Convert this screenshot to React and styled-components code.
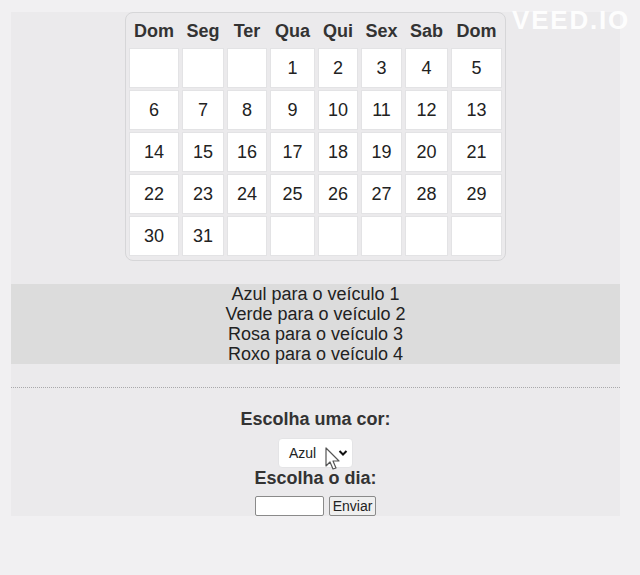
import React from 'react';
import styled, { createGlobalStyle } from 'styled-components';

const GlobalStyle = createGlobalStyle`
  html, body {
    margin: 0;
    padding: 0;
    background: #f1f0f2;
    font-family: "Liberation Sans", Arial, sans-serif;
    color: #222;
  }
`;

const Page = styled.div`
  position: relative;
  width: 640px;
  height: 575px;
  padding: 12px 20px 0 11px;
  box-sizing: border-box;
`;

const Main = styled.div`
  background: #ebeaec;
  height: 504px;
  display: flex;
  flex-direction: column;
  align-items: center;
`;

const Calendar = styled.div`
  width: 381px;
  box-sizing: border-box;
  border: 1px solid #d6d6d8;
  border-radius: 8px;
  padding: 3px 3px 4px;
  display: grid;
  grid-template-columns: 50px 42px 40px 45px 40px 41px 43px 51px;
  grid-template-rows: 30px repeat(5, 40px);
  column-gap: 3px;
  row-gap: 2px;
`;

const HeadCell = styled.div`
  display: flex;
  align-items: center;
  justify-content: center;
  font-weight: bold;
  font-size: 18px;
  color: #333;
`;

const DayCell = styled.div`
  display: flex;
  align-items: center;
  justify-content: center;
  background: #fff;
  border: 1px solid #e3e3e5;
  font-size: 18px;
  color: #222;
`;

const Legend = styled.div`
  margin-top: 23px;
  align-self: stretch;
  background: #dcdcdc;
  text-align: center;
  font-size: 18px;
  line-height: 20px;
  color: #222;
`;

const Divider = styled.div`
  align-self: stretch;
  margin-top: 23px;
  border-top: 1px dotted #a9a9ab;
`;

const Form = styled.form`
  display: flex;
  flex-direction: column;
  align-items: center;
  margin-top: 21px;
`;

const Label = styled.div`
  font-weight: bold;
  font-size: 18px;
  line-height: 20px;
  color: #333;
`;

const SelectBox = styled.div`
  position: relative;
  margin-top: 9px;
  width: 75px;
  height: 30px;
  box-sizing: border-box;
  background: #fff;
  border: 1px solid #e4e4e6;
  border-radius: 4px;
  display: flex;
  align-items: center;
  justify-content: space-between;
  padding: 0 4px 0 10px;
  font-size: 14px;
  color: #222;
`;

const Row = styled.div`
  display: flex;
  gap: 5px;
  margin-top: 8px;
`;

const TextInput = styled.input`
  width: 69px;
  height: 20px;
  box-sizing: border-box;
  border: 1px solid #8a8a8a;
  border-radius: 2px;
  background: #fff;
  padding: 0;
`;

const Button = styled.button`
  height: 20px;
  width: 47px;
  box-sizing: border-box;
  border: 1px solid #8a8a8a;
  border-radius: 2px;
  background: #efefef;
  font-family: "Liberation Sans", Arial, sans-serif;
  font-size: 14px;
  color: #222;
  padding: 0;
`;

const Cursor = styled.svg`
  position: absolute;
  left: 46px;
  top: 8px;
`;

const Watermark = styled.div`
  position: absolute;
  top: 5px;
  left: 512px;
  font-family: "Liberation Sans", Arial, sans-serif;
  font-weight: bold;
  font-size: 26px;
  letter-spacing: 1.8px;
  color: rgba(255, 255, 255, 0.92);
`;

const days = ['Dom', 'Seg', 'Ter', 'Qua', 'Qui', 'Sex', 'Sab', 'Dom'];
const cells = [null, null, null];
for (let i = 1; i <= 31; i++) cells.push(i);
while (cells.length < 40) cells.push(null);

const legend = [
  'Azul para o veículo 1',
  'Verde para o veículo 2',
  'Rosa para o veículo 3',
  'Roxo para o veículo 4'
];

export default function App() {
  return (
    <Page>
      <GlobalStyle />
      <Main>
        <Calendar>
          {days.map((d, i) => <HeadCell key={`h${i}`}>{d}</HeadCell>)}
          {cells.map((c, i) => <DayCell key={`c${i}`}>{c}</DayCell>)}
        </Calendar>
        <Legend>
          {legend.map(l => <div key={l}>{l}</div>)}
        </Legend>
        <Divider />
        <Form onSubmit={e => e.preventDefault()}>
          <Label>Escolha uma cor:</Label>
          <SelectBox>
            <span>Azul</span>
            <svg width="10" height="8" viewBox="0 0 10 8">
              <path d="M1.5 2 L5 5.5 L8.5 2" fill="none" stroke="#111" strokeWidth="2" />
            </svg>
            <Cursor width="16" height="24" viewBox="0 0 16 24">
              <path d="M1 1 L1 19 L5 15 L8 22 L11 21 L8 14 L14 14 Z" fill="#fff" stroke="#555" strokeWidth="1.2" strokeLinejoin="round" />
            </Cursor>
          </SelectBox>
          <Label>Escolha o dia:</Label>
          <Row>
            <TextInput type="text" />
            <Button type="submit">Enviar</Button>
          </Row>
        </Form>
      </Main>
      <Watermark>VEED.IO</Watermark>
    </Page>
  );
}
